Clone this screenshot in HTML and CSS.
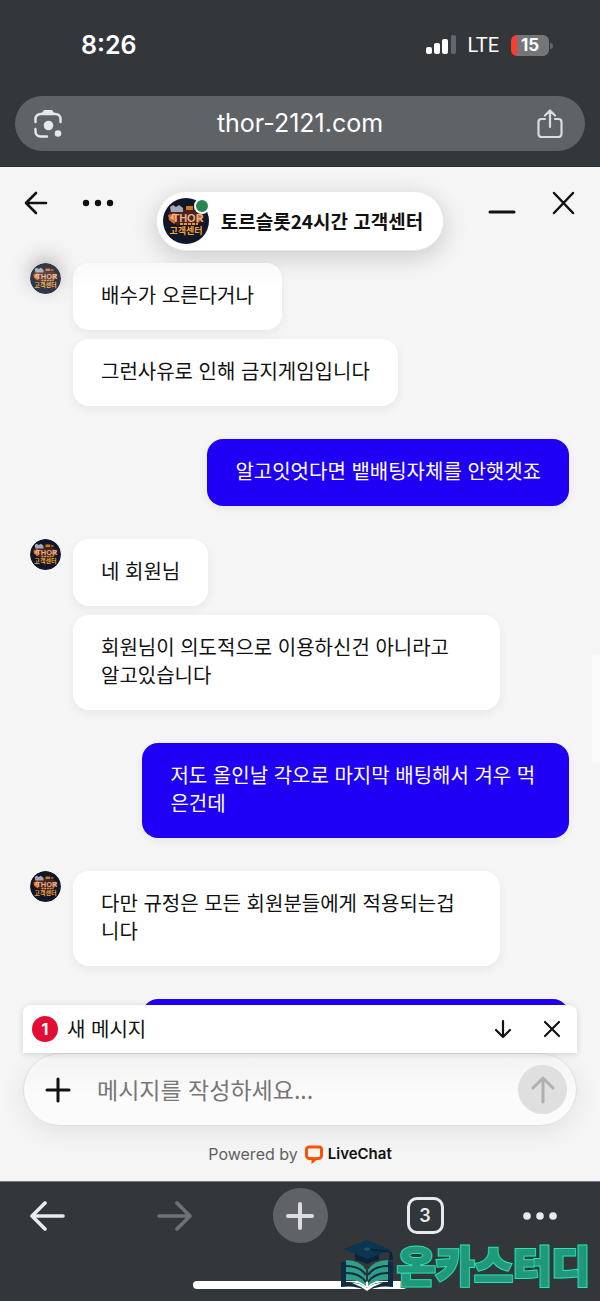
FILE: index.html
```html
<!DOCTYPE html>
<html lang="ko">
<head>
<meta charset="utf-8">
<meta name="viewport" content="width=device-width, initial-scale=1">
<title>토르슬롯24시간 고객센터</title>
<link rel="stylesheet" href="styles.css">
</head>
<body>
<header class="browser-top">
  <div class="status">
    <time class="clock">8:26</time>
    <div class="signals">
      <svg width="30" height="20" viewBox="0 0 30 20" aria-hidden="true"><g fill="#fff"><rect y="12" width="6" height="7" rx="2"/><rect x="8" y="8" width="6" height="11" rx="2"/><rect x="16" y="4" width="6" height="15" rx="2"/></g><rect x="25" width="5" height="19" rx="2" fill="#64676a"/></svg>
      <span class="network">LTE</span>
      <span class="battery">15</span>
    </div>
  </div>
  <div class="address">
    <button class="icon-btn" aria-label="이미지 검색"><svg width="30" height="30" viewBox="0 0 30 30" fill="none" stroke="#e4e7eb" stroke-width="2.400" stroke-linecap="round"><path d="M2.500 13V10a5 5 0 0 1 5-5h15a5 5 0 0 1 5 5v3M2.500 20v2.500a5 5 0 0 0 5 5H14"/><path d="M9 4.500 11 1.500h8l2 3z" fill="#e4e7eb" stroke-width="1"/><circle cx="15.500" cy="16.500" r="4.800" fill="#e4e7eb" stroke="none"/><circle cx="25" cy="24.500" r="3.300" fill="#e4e7eb" stroke="none"/></svg></button>
    <span class="url">thor-2121.com</span>
    <button class="icon-btn" aria-label="공유"><svg width="26" height="30" viewBox="0 0 26 30" fill="none" stroke="#d8dce3" stroke-width="2.200" stroke-linecap="round" stroke-linejoin="round"><path d="M8 10H4.500A3 3 0 0 0 1.500 13v12a3 3 0 0 0 3 3h17a3 3 0 0 0 3-3V13a3 3 0 0 0-3-3H18M13 18V2M8 6.500 13 1.500l5 5"/></svg></button>
  </div>
</header>

<main class="chat">
  <div class="chat-head">
    <div class="head-side">
      <button class="icon-btn" aria-label="뒤로"><svg width="24" height="24" viewBox="0 0 24 24" fill="none" stroke="#111" stroke-width="2.600" stroke-linecap="round" stroke-linejoin="round"><path d="M22 12H2M12 2 2 12l10 10"/></svg></button>
      <button class="icon-btn" aria-label="메뉴"><svg width="32" height="24" viewBox="0 0 32 24" fill="#111"><circle cx="4" cy="12" r="3.200"/><circle cx="16" cy="12" r="3.200"/><circle cx="28" cy="12" r="3.200"/></svg></button>
    </div>
    <div class="agent">
      <span class="agent-photo">
        <svg width="46" height="46" viewBox="0 0 46 46" role="img" aria-label="고객센터">
          <g id="avatar">
            <circle cx="23" cy="23" r="23" fill="#101729"/>
            <path d="M6 14l5-4 24 3 5 4-1 7-8 3H14l-7-5z" fill="#4a241c"/>
            <path d="M7 9l3-2 3 2 3-2 4 3v4H8z" fill="#a4a9b8"/>
            <path d="M5 17l7-2 2 7-3 4-5-4zM34 18l5-2-1 6-4 4z" fill="#d96a2a"/>
            <path d="M7 20l3-4 1 6z" fill="#f3b47a"/>
            <path d="M23 8h7v4h-7z" fill="#d2781e"/><path d="M31 9h4v3h-4z" fill="#9a5520"/>
            <text x="25" y="24" class="logo-thor" text-anchor="middle">THOR</text>
            <path d="M17 26h18" stroke="#e9962c" stroke-width="2" stroke-dasharray="3 1"/>
            <text x="23" y="36" class="logo-ko" text-anchor="middle">고객센터</text>
          </g>
        </svg>
        <i class="online"></i>
      </span>
      <h1>토르슬롯24시간 고객센터</h1>
    </div>
    <div class="head-side">
      <button class="icon-btn" aria-label="최소화"><svg width="30" height="24" viewBox="0 0 30 24" stroke="#111" stroke-width="3" stroke-linecap="round"><path d="M4 21h24"/></svg></button>
      <button class="icon-btn" aria-label="닫기"><svg width="24" height="24" viewBox="0 0 24 24" stroke="#111" stroke-width="2.500" stroke-linecap="round"><path d="m2 2 19 20M21 2 2 22"/></svg></button>
    </div>
  </div>

  <div class="messages">
    <section class="group">
      <svg class="avatar faded" viewBox="0 0 46 46" role="img" aria-label="상담원"><use href="#avatar"/></svg>
      <div class="stack">
        <p class="bubble first">배수가 오른다거나</p>
        <p class="bubble">그런사유로 인해 금지게임입니다</p>
      </div>
    </section>
    <section class="group mine">
      <div class="stack"><p class="bubble">알고잇엇다면 뱉배팅자체를 안햇겟죠</p></div>
    </section>
    <section class="group">
      <svg class="avatar" viewBox="0 0 46 46" role="img" aria-label="상담원"><use href="#avatar"/></svg>
      <div class="stack">
        <p class="bubble">네 회원님</p>
        <p class="bubble wide">회원님이 의도적으로 이용하신건 아니라고<br>알고있습니다</p>
      </div>
    </section>
    <section class="group mine">
      <div class="stack"><p class="bubble wide">저도 올인날 각오로 마지막 배팅해서 겨우 먹<br>은건데</p></div>
    </section>
    <section class="group">
      <svg class="avatar" viewBox="0 0 46 46" role="img" aria-label="상담원"><use href="#avatar"/></svg>
      <div class="stack"><p class="bubble wide">다만 규정은 모든 회원분들에게 적용되는겁<br>니다</p></div>
    </section>
    <section class="group mine peek">
      <div class="stack"><p class="bubble wide"></p></div>
    </section>
    <span class="scroll-thumb"></span>
  </div>

  <div class="composer">
    <div class="notice">
      <span class="count">1</span>
      <span class="notice-text">새 메시지</span>
      <button class="icon-btn" aria-label="아래로"><svg width="18" height="20" viewBox="0 0 18 20" fill="none" stroke="#111" stroke-width="2.200" stroke-linecap="round" stroke-linejoin="round"><path d="M9 2v16M2 11l7 7 7-7"/></svg></button>
      <button class="icon-btn" aria-label="알림 닫기"><svg width="18" height="18" viewBox="0 0 18 18" stroke="#111" stroke-width="2.200" stroke-linecap="round"><path d="m2 2 14 14M16 2 2 16"/></svg></button>
    </div>
    <form class="entry">
      <button type="button" class="icon-btn" aria-label="추가"><svg width="26" height="26" viewBox="0 0 26 26" stroke="#111" stroke-width="3" stroke-linecap="round"><path d="M13 2v22M2 13h22"/></svg></button>
      <input type="text" aria-label="메시지" placeholder="메시지를 작성하세요...">
      <button type="button" class="send" aria-label="보내기"><svg width="24" height="28" viewBox="0 0 24 28" fill="none" stroke="#b0b0b0" stroke-width="3" stroke-linecap="round" stroke-linejoin="round"><path d="M12 26V3M2 12 12 2l10 10"/></svg></button>
    </form>
  </div>

  <div class="powered">
    <span>Powered by</span>
    <a href="#"><svg width="20" height="20" viewBox="0 0 20 20" aria-hidden="true"><path d="M5 3h10a2.500 2.500 0 0 1 2.500 2.500v6A3 3 0 0 1 14.500 14.500H12L9 17v-2.500H5.500a3 3 0 0 1-3-3v-6A2.500 2.500 0 0 1 5 3z" fill="none" stroke="#ff5100" stroke-width="3"/></svg>LiveChat</a>
  </div>
</main>

<nav class="toolbar" aria-label="브라우저">
  <div class="tools">
    <button class="icon-btn" aria-label="이전"><svg width="36" height="30" viewBox="0 0 36 30" fill="none" stroke="#e8eaed" stroke-width="3.600" stroke-linecap="round" stroke-linejoin="round"><path d="M33 15H3M15 2 2 15l13 13"/></svg></button>
    <button class="icon-btn" aria-label="다음"><svg width="36" height="30" viewBox="0 0 36 30" fill="none" stroke="#707274" stroke-width="3.600" stroke-linecap="round" stroke-linejoin="round"><path d="M3 15h30M21 2l13 13-13 13"/></svg></button>
    <button class="new-tab" aria-label="새 탭"><svg width="28" height="28" viewBox="0 0 28 28" stroke="#dcdce2" stroke-width="4" stroke-linecap="round"><path d="M14 2v24M2 14h24"/></svg></button>
    <button class="tabs" aria-label="탭 3개">3</button>
    <button class="icon-btn" aria-label="더보기"><svg width="36" height="30" viewBox="0 0 36 30" fill="#e8eaed"><circle cx="5" cy="15" r="3.800"/><circle cx="18" cy="15" r="3.800"/><circle cx="31" cy="15" r="3.800"/></svg></button>
  </div>
  <span class="home-bar"></span>
  <div class="watermark">
    <svg width="54" height="52" viewBox="0 0 54 52" aria-hidden="true">
      <path d="M1 22h5v20q13-1 21 6 8-7 21-6V22h5v25q-15-2-26 4Q16 45 1 47z" fill="#0b2c44"/>
      <path d="M12 43q9 0 15 5 6-5 15-5l-9 4-6 4-6-4z" fill="#fff"/>
      <path d="M6 20q14 0 20 10v16Q19 39 6 40zM48 20q-14 0-20 10v16q7-7 20-6z" fill="#2f9f86"/>
      <path d="M6 26q14 0 20 9M6 33q14 0 20 9M48 26q-14 0-20 9M48 33q-14 0-20 9" fill="none" stroke="#0b2c44" stroke-width="2"/>
      <path d="M15 12v8q7 1 12 4 5-3 12-4v-8z" fill="#07243b"/>
      <path d="M4 9 27 0l24 10-24 9z" fill="#0c3552"/>
      <path d="M28 9l22 3 2 6" fill="none" stroke="#07243b" stroke-width="1.500"/>
      <path d="M50 12h2l1 8h-4z" fill="#07243b"/><ellipse cx="27" cy="9" rx="3" ry="1.500" fill="#28516c"/>
    </svg>
    <svg class="brand" width="200" height="66" viewBox="0 0 200 66">
      <use href="#brand-name" stroke="#07502a" stroke-width="4"/>
      <use href="#brand-name" stroke="#36dcc0" stroke-width="3"/>
      <g fill="#20997a" stroke="#20997a" stroke-width="1"><text id="brand-name" x="3" y="49">온카스터디</text></g>
    </svg>
  </div>
</nav>
</body>
</html>
```
FILE: styles.css
```css
* { box-sizing: border-box; }
body {
  margin: 0;
  min-height: 100vh;
  display: flex;
  flex-direction: column;
  background: #f5f5f5;
  color: #111;
  font-family: Inter, "Noto Sans CJK KR", sans-serif;
}
button { border: 0; padding: 0; margin: 0; background: none; color: inherit; font: inherit; }
svg { display: block; flex: none; }
.icon-btn { display: flex; flex: none; align-items: center; justify-content: center; }
.logo-thor { font: 700 11px "Liberation Sans", sans-serif; fill: #e5b28c; }
.logo-ko { font: 700 9px "Noto Sans CJK KR", sans-serif; fill: #f2a23a; }

/* browser top */
.browser-top { background: #34373a; padding: 28px 15px 15px; border-bottom: 1px solid #2b2d30; }
.status { display: flex; justify-content: space-between; align-items: center; height: 34px; padding: 0 36px 0 66px; color: #fff; }
.clock { font-size: 25px; font-weight: 600; }
.signals { display: flex; align-items: center; }
.network { margin: 0 12px; font: 400 20px Roboto, sans-serif; }
.battery {
  position: relative;
  width: 38px;
  height: 21px;
  border-radius: 6px;
  background: linear-gradient(90deg, #ff3b30 6px, #747678 6px);
  font-size: 17px;
  font-weight: 700;
  line-height: 21px;
  text-align: center;
}
.battery::after { content: ""; position: absolute; right: -4px; top: 8px; width: 3px; height: 6px; border-radius: 0 3px 3px 0; background: #64676a; }
.address {
  display: flex;
  align-items: center;
  justify-content: space-between;
  height: 55px;
  margin-top: 34px;
  padding: 0 22px 0 18px;
  border-radius: 28px;
  background: #5f6366;
}
.url { color: #fff; font-size: 25px; line-height: 28px; padding-bottom: 2px; }

/* chat header */
.chat { flex: 1; display: flex; flex-direction: column; }
.chat-head { display: flex; justify-content: space-between; align-items: flex-start; padding: 24px 24px 12px; }
.head-side { display: flex; justify-content: space-between; width: 90px; }
.agent {
  display: flex;
  align-items: center;
  gap: 12px;
  height: 60px;
  padding: 0 20px 0 6px;
  border: 1px solid #e8e8e8;
  border-radius: 30px;
  background: #fff;
  box-shadow: 0 6px 24px rgba(0, 0, 0, .18);
}
.agent-photo { position: relative; }
.online { position: absolute; top: 0; right: -1px; width: 16px; height: 16px; border: 2px solid #fff; border-radius: 50%; background: #27864f; }
.agent h1 { margin: 0; font: 700 19px/28px "Noto Sans CJK KR", sans-serif; white-space: nowrap; }

/* messages */
.messages { position: relative; flex: 1; display: flex; flex-direction: column; gap: 33px; padding: 0 31px 0 30px; }
.group { display: flex; align-items: flex-start; gap: 12px; }
.avatar { width: 31px; height: 31px; border-radius: 50%; }
.faded { opacity: .85; box-shadow: 0 -6px 18px rgba(90, 70, 70, .4); }
.stack { flex: 1; display: flex; flex-direction: column; align-items: flex-start; gap: 9px; }
.bubble {
  margin: 0;
  padding: 18px 28px 21px;
  border-radius: 16px;
  background: #fff;
  box-shadow: 0 3px 10px rgba(0, 0, 0, .06);
  font: 400 20px/28px "Noto Sans CJK KR", sans-serif;
  white-space: nowrap;
}
.first { background: linear-gradient(#f9f9f9, #fff 24px); }
.wide { width: 86%; }
.mine { padding-left: 43px; }
.mine .stack { align-items: flex-end; }
.mine .bubble { background: #2000f5; color: #fff; }
.peek { height: 6px; overflow: hidden; }
.scroll-thumb { position: absolute; right: 0; top: 392px; width: 8px; height: 108px; border-radius: 4px 0 0 4px; background: #fafafa; }

/* composer */
.composer { padding: 0 23px; }
.notice {
  position: relative;
  display: flex;
  align-items: center;
  height: 48px;
  padding: 0 16px 0 9px;
  border-radius: 8px 8px 0 0;
  background: #fff;
  box-shadow: 0 1px 6px rgba(0, 0, 0, .14);
}
.count { width: 26px; border-radius: 50%; background: #e30c34; color: #fff; font-size: 16px; font-weight: 700; line-height: 26px; text-align: center; }
.notice-text { flex: 1; margin-left: 9px; font: 400 20px/28px "Noto Sans CJK KR", sans-serif; }
.notice .icon-btn + .icon-btn { margin-left: 31px; }
.entry {
  display: flex;
  align-items: center;
  height: 73px;
  padding: 0 9px 0 21px;
  border: 1px solid #dedede;
  border-radius: 37px;
  background: linear-gradient(#f3f3f3, #fbfbfb 60%);
  box-shadow: 0 6px 26px rgba(0, 0, 0, .08);
}
.entry input {
  flex: 1;
  min-width: 0;
  margin: 0 12px 0 26px;
  padding: 0 0 2px;
  border: 0;
  outline: 0;
  background: none;
  font: 400 23px/32px "Noto Sans CJK KR", sans-serif;
}
.entry input::placeholder { color: #777; opacity: 1; }
.send { display: flex; align-items: center; justify-content: center; width: 49px; height: 49px; border-radius: 50%; background: #dfdfdf; }
.powered { display: flex; align-items: center; justify-content: center; gap: 6px; height: 55px; color: #606060; font-size: 16px; }
.powered a { display: flex; align-items: center; gap: 4px; color: #111; font-size: 15px; font-weight: 600; text-decoration: none; }

/* browser toolbar */
.toolbar { position: relative; height: 120px; border-top: 1px solid #777; background: #34373a; }
.tools { display: grid; grid-template-columns: 96fr 156fr 96fr 154fr 76fr 22fr; align-items: center; justify-items: center; padding-top: 6px; }
.new-tab { display: flex; align-items: center; justify-content: center; width: 55px; height: 55px; border-radius: 50%; background: #5f6366; }
.tabs { width: 37px; height: 37px; border: 3px solid #e8eaed; border-radius: 10px; color: #e8eaed; font-size: 18px; font-weight: 600; }
.home-bar { display: block; width: 214px; height: 8px; margin: 38px auto 0; border-radius: 4px; background: #fff; }
.watermark { position: absolute; right: 6px; bottom: 2px; display: flex; align-items: center; }
.brand { font: 900 42px "Noto Sans CJK KR", sans-serif; stroke-linejoin: miter; }
```
